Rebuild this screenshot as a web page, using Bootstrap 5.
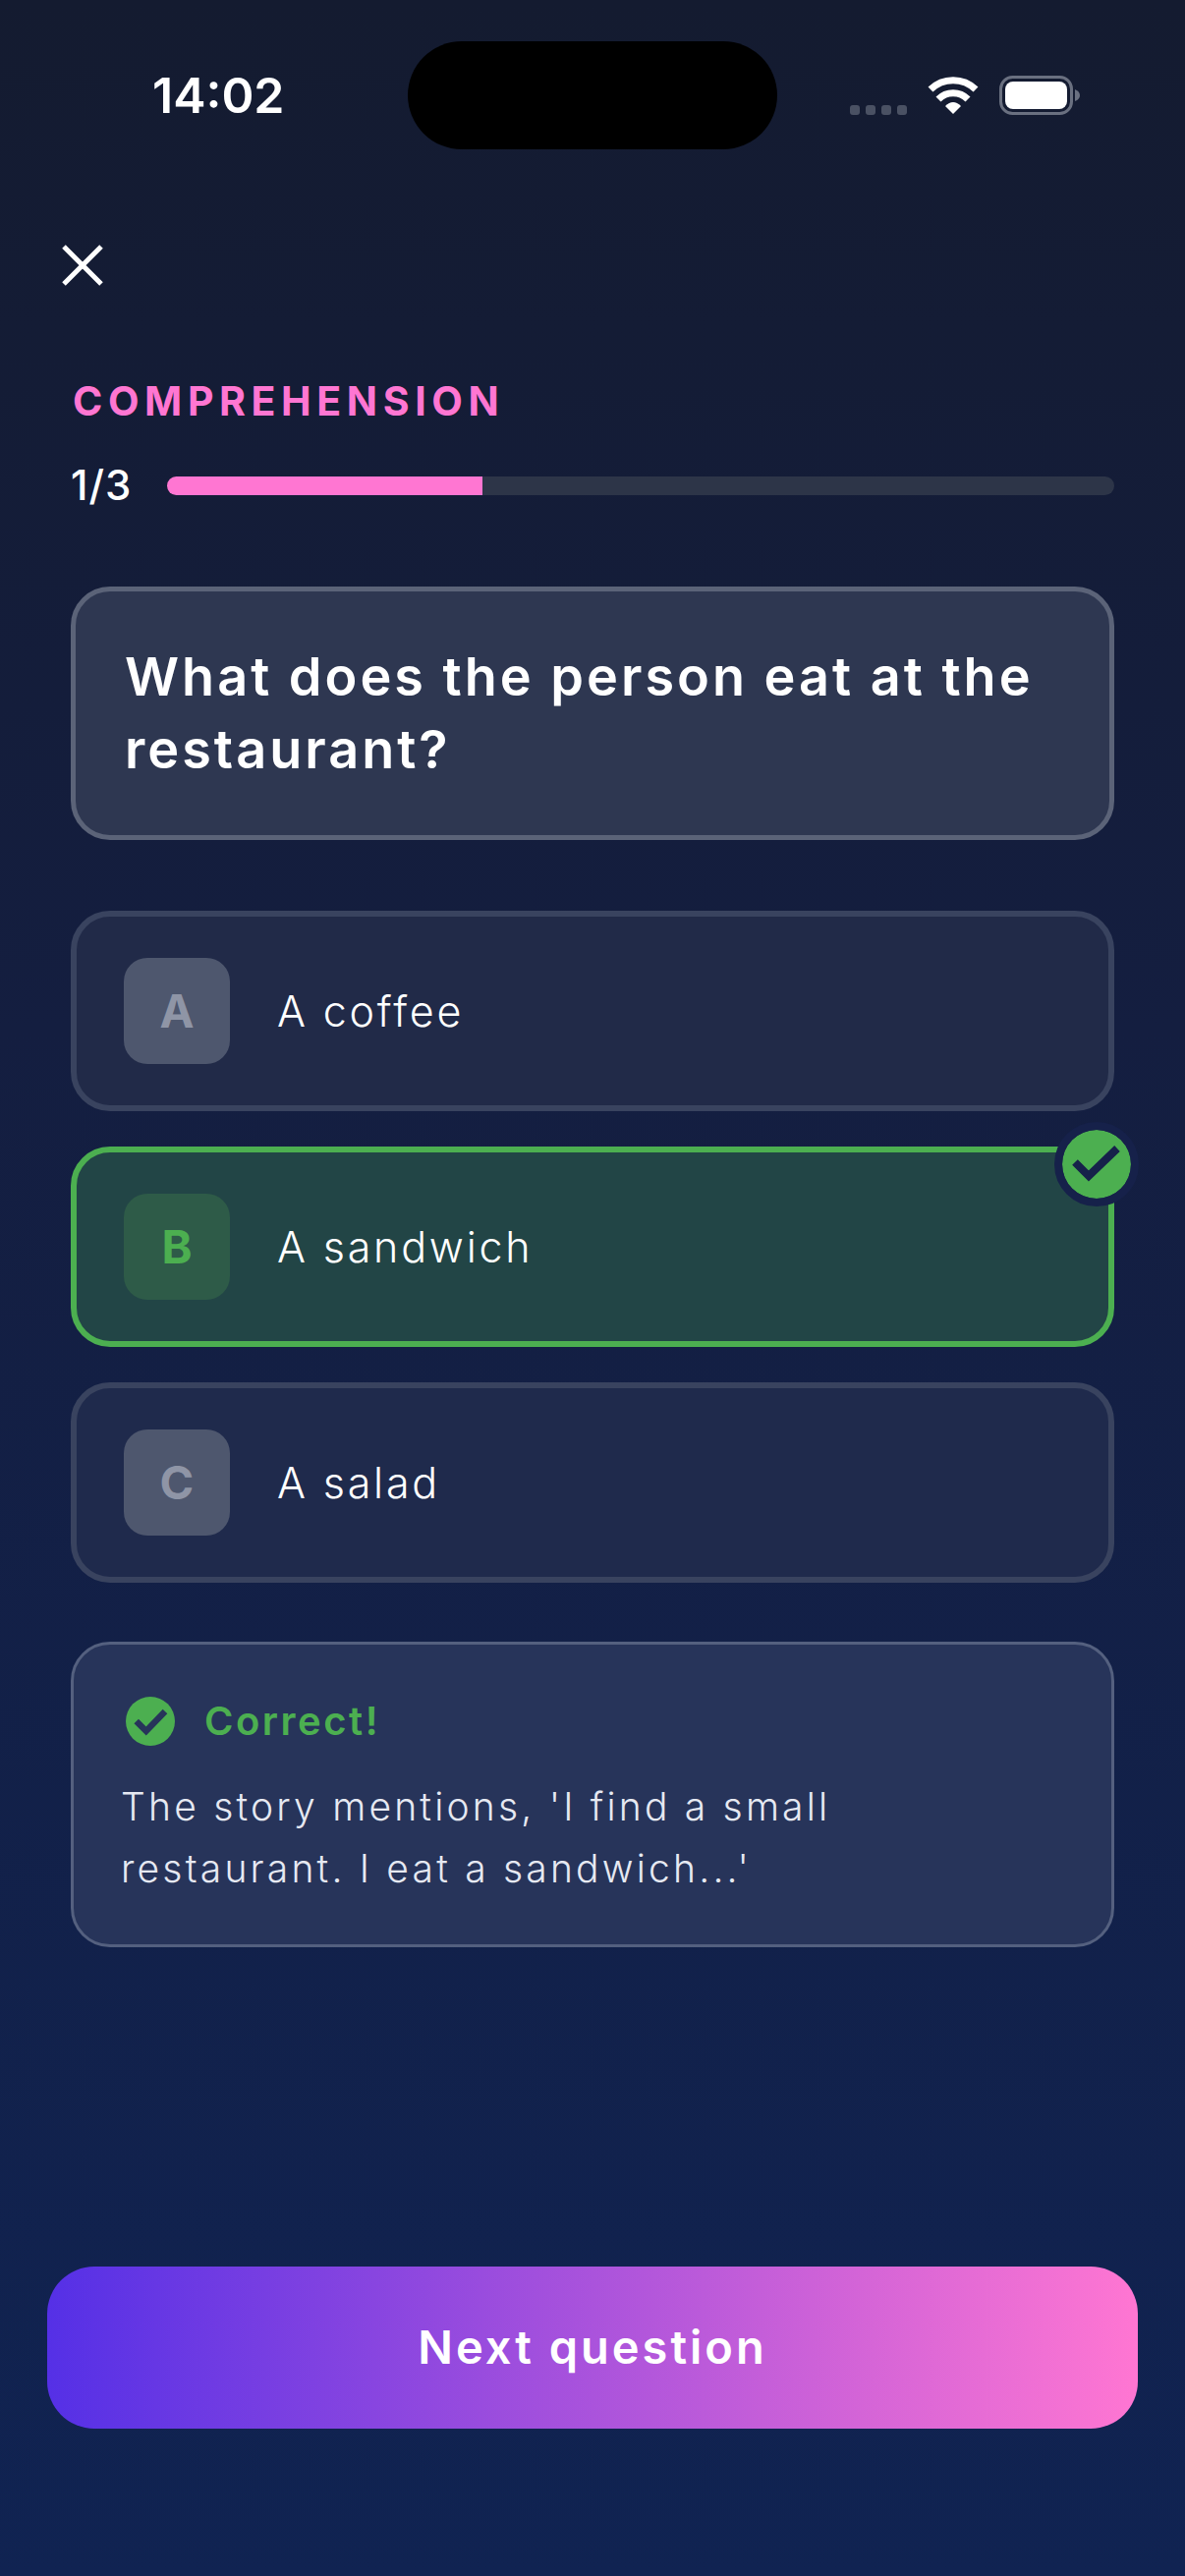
<!DOCTYPE html>
<html lang="en">
<head>
  <meta charset="UTF-8">
  <title>Comprehension</title>
  <meta name="viewport" content="width=device-width, initial-scale=1">

  <!-- Bootstrap 5 CDN -->
  <link href="https://cdn.jsdelivr.net/npm/bootstrap@5.3.0/dist/css/bootstrap.min.css" rel="stylesheet">
  <script src="https://cdn.jsdelivr.net/npm/bootstrap@5.3.0/dist/js/bootstrap.bundle.min.js"></script>

  <style>
    body {
      background: #141c32;
      font-family: "Inter", "Liberation Sans", sans-serif;
      color: #fff;
    }
    .screen {
      height: 2622px;
      overflow: hidden;
      background: linear-gradient(180deg, #141b30 0%, #141e40 40%, #102352 100%);
    }
    .status-row {
      display: grid;
      grid-template-columns: 415px 376px 415px;
      padding-top: 42px;
    }
    .status-time {
      padding-left: 155px;
      font-size: 50px;
      font-weight: 600;
      line-height: 1;
    }
    .island {
      height: 110px;
      border-radius: 55px;
      background: #000;
    }
    .status-icons {
      padding-left: 74px;
      gap: 21px;
    }
    .sig-dots {
      gap: 6px;
      margin-top: 30px;
    }
    .sig-dots span {
      width: 10px;
      height: 10px;
      border-radius: 3px;
      background: #4a5163;
    }
    .main-col {
      padding: 0 72px;
    }
    .close-icon {
      display: block;
      margin: 97px 0 0 -9px;
    }
    .section-label {
      margin-top: 92px;
      margin-left: 2px;
      font-size: 41px;
      font-weight: 700;
      line-height: 50px;
      letter-spacing: 5.6px;
      color: #ff76d2;
    }
    .progress-row {
      margin-top: 41px;
      height: 40px;
    }
    .step-text {
      width: 98px;
      font-size: 42px;
      font-weight: 500;
      line-height: 40px;
      letter-spacing: 1px;
    }
    .bar-track {
      flex: 1;
      height: 19px;
      border-radius: 10px;
      overflow: hidden;
      background: #2d3548;
    }
    .bar-fill {
      height: 100%;
      background: #ff76d2;
    }
    .question-box {
      margin-top: 83px;
      padding: 50px;
      border: 5px solid #5b6378;
      border-radius: 40px;
      background: #2e3751;
      font-size: 54px;
      font-weight: 600;
      line-height: 74px;
      letter-spacing: 3px;
    }
    .answers {
      margin-top: 72px;
      gap: 36px;
    }
    .answer {
      position: relative;
      height: 204px;
      padding-left: 48px;
      gap: 48px;
      border: 6px solid #39435f;
      border-radius: 40px;
      background: #212a48;
      font-size: 43px;
      font-weight: 300;
      letter-spacing: 2.8px;
    }
    .answer.is-last {
      background: #1f2a4c;
    }
    .answer-key {
      width: 108px;
      height: 108px;
      border-radius: 24px;
      background: #4e576e;
      color: #8f95a6;
      font-size: 47px;
      font-weight: 700;
      letter-spacing: 0;
    }
    .answer.is-right {
      border-color: #4caf50;
      background: #224546;
    }
    .answer.is-right .answer-key {
      background: #2e5b48;
      color: #4caf50;
    }
    .right-mark {
      position: absolute;
      top: -31px;
      right: -31px;
      box-sizing: content-box;
      border: 8px solid #16214a;
      border-radius: 50%;
      background: #16214a;
    }
    .feedback {
      margin-top: 60px;
      height: 311px;
      padding: 53px 48px 0;
      border: 3px solid #54607f;
      border-radius: 40px;
      background: #27345a;
    }
    .feedback-head {
      gap: 30px;
      margin-left: 5px;
      height: 50px;
      font-size: 40px;
      font-weight: 600;
      letter-spacing: 2.5px;
      color: #4caf50;
    }
    .feedback-text {
      margin: 30px 0 0;
      max-width: 800px;
      font-size: 39px;
      font-weight: 300;
      line-height: 63px;
      letter-spacing: 3.2px;
      color: #e6e9f2;
    }
    .next-wrap {
      padding: 0 48px 150px;
    }
    .next-btn {
      height: 165px;
      border: 0;
      border-radius: 48px;
      background: linear-gradient(90deg, #5530e6 0%, #ff76d2 100%);
      color: #fff;
      font-size: 47px;
      font-weight: 600;
      letter-spacing: 3px;
    }
  </style>
</head>
<body>

<div class="screen d-flex flex-column">

  <!-- status bar -->
  <div class="status-row align-items-center">
    <div class="status-time">14:02</div>
    <div class="island"></div>
    <div class="status-icons d-flex align-items-center">
      <div class="sig-dots d-flex"><span></span><span></span><span></span><span></span></div>
      <svg width="52" height="38" viewBox="0 0 52 38">
        <path d="M3 13A33 33 0 0 1 49 13" fill="none" stroke="#fff" stroke-width="7"/>
        <path d="M11 23A21 21 0 0 1 41 23" fill="none" stroke="#fff" stroke-width="7"/>
        <path d="M18 30Q26 22 34 30L26 38Z" fill="#fff"/>
      </svg>
      <svg width="83" height="40" viewBox="0 0 83 40">
        <rect x="1.5" y="1.5" width="72" height="37" rx="12" fill="none" stroke="#6a7080" stroke-width="3"/>
        <rect x="6" y="6" width="63" height="28" rx="8" fill="#fff"/>
        <path d="M77 14Q82 16 82 20Q82 24 77 26Z" fill="#6a7080"/>
      </svg>
    </div>
  </div>

  <div class="main-col">
    <svg class="close-icon" width="42" height="42" viewBox="0 0 42 42">
      <path d="M2 2L40 40M40 2L2 40" stroke="#fff" stroke-width="5" fill="none"/>
    </svg>

    <div class="section-label">COMPREHENSION</div>

    <div class="progress-row d-flex align-items-center">
      <div class="step-text">1/3</div>
      <div class="bar-track"><div class="bar-fill" style="width: 33.33%"></div></div>
    </div>

    <div class="question-box">What does the person eat at the restaurant?</div>

    <div class="answers d-flex flex-column">
      <div class="answer d-flex align-items-center">
        <div class="answer-key d-flex align-items-center justify-content-center">A</div>
        <div>A coffee</div>
      </div>
      <div class="answer is-right d-flex align-items-center">
        <div class="answer-key d-flex align-items-center justify-content-center">B</div>
        <div>A sandwich</div>
        <svg class="right-mark" width="70" height="70" viewBox="0 0 70 70">
          <circle cx="35" cy="35" r="35" fill="#4caf50"/>
          <path d="M13 33L27 47L56 19" fill="none" stroke="#16214a" stroke-width="8"/>
        </svg>
      </div>
      <div class="answer is-last d-flex align-items-center">
        <div class="answer-key d-flex align-items-center justify-content-center">C</div>
        <div>A salad</div>
      </div>
    </div>

    <div class="feedback">
      <div class="feedback-head d-flex align-items-center">
        <svg width="50" height="50" viewBox="0 0 70 70">
          <circle cx="35" cy="35" r="35" fill="#4caf50"/>
          <path d="M15 35L29 49L56 21" fill="none" stroke="#27345a" stroke-width="9"/>
        </svg>
        <span>Correct!</span>
      </div>
      <p class="feedback-text">The story mentions, 'I find a small restaurant. I eat a sandwich...'</p>
    </div>
  </div>

  <div class="next-wrap mt-auto">
    <button type="button" class="btn next-btn w-100">Next question</button>
  </div>
</div>

</body>
</html>
